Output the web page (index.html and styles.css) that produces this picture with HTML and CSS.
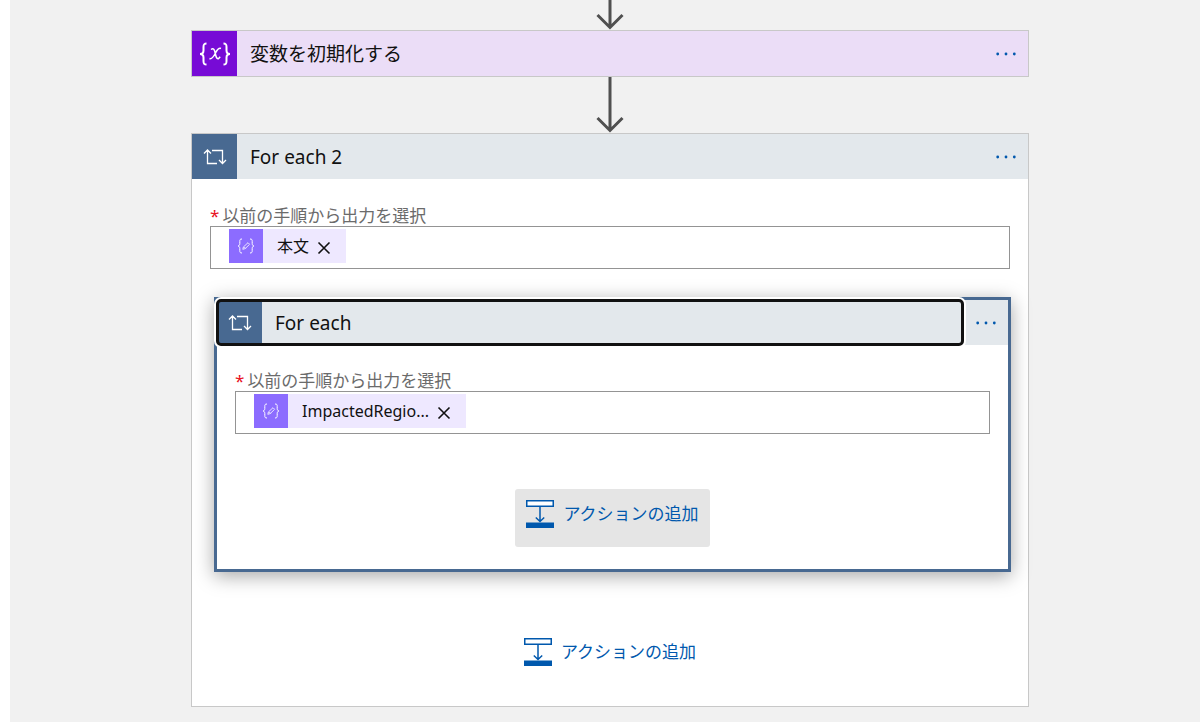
FILE: index.html
```
<!DOCTYPE html>
<html lang="ja">
<head>
    <meta charset="UTF-8">
    <meta name="viewport" content="width=device-width, initial-scale=1.0">
    <title>ロジック アプリ デザイナー</title>
    <link rel="stylesheet" href="styles.css">
</head>
<body>
    <!-- Shared icons -->
    <svg class="sprite" aria-hidden="true">
        <symbol id="icon-loop" viewBox="0 0 24 18">
            <path d="M4.5 3v12.500H14M1 5.500l3.500-3.500L8 5.500M9 2.500h10.500V14.500M16 12l3.500 3.500L23 12" fill="none" stroke="currentColor" stroke-width="1.300"/>
        </symbol>
        <symbol id="icon-add" viewBox="0 0 28 28">
            <path d="M.75.75h26.500v5.500H.75z" fill="#fff" stroke="currentColor" stroke-width="1.500"/>
            <path d="M14 6.500V21M9.800 17.500l4.200 4 4.200-4" fill="none" stroke="currentColor" stroke-width="1.500"/>
            <path d="M0 22.500h28V28H0z" fill="currentColor"/>
        </symbol>
        <symbol id="icon-token" viewBox="0 0 20 18">
            <path d="M6 2C3.800 2 3.800 3 3.800 4.500v2C3.800 8 3 9 2 9c1 0 1.800 1 1.800 2.500v2c0 1.500 0 2.500 2.200 2.500M14 2c2.200 0 2.200 1 2.200 2.500v2c0 1.500.8 2.500 1.800 2.500-1 0-1.800 1-1.800 2.500v2c0 1.500 0 2.500-2.200 2.500" fill="none" stroke="currentColor" stroke-width="1"/>
            <path d="M6.800 12.300l.6-2.300 4.600-4.300 1.600 1.600-4.400 4.300zM8 9.800l1.600 1.600" fill="none" stroke="currentColor" stroke-width=".8"/>
        </symbol>
        <symbol id="icon-close" viewBox="0 0 14 14">
            <path d="M1.500 1.500l11 11M12.500 1.500l-11 11" fill="none" stroke="currentColor" stroke-width="1.600"/>
        </symbol>
        <symbol id="icon-more" viewBox="0 0 22 4">
            <circle cx="2.700" cy="2" r="1.400" fill="currentColor"/>
            <circle cx="11" cy="2" r="1.400" fill="currentColor"/>
            <circle cx="19.300" cy="2" r="1.400" fill="currentColor"/>
        </symbol>
    </svg>

    <main class="canvas">
        <div class="flow">
            <svg class="arrow arrow-top" viewBox="0 0 28 30" aria-hidden="true">
                <path d="M14 0v28M1.500 15L14 27.500 26.500 15"/>
            </svg>

            <section class="card">
                <div class="card-header variable">
                    <button type="button" class="card-title">
                        <span class="card-icon">
                            <svg class="icon-variable" viewBox="0 0 32 24" aria-hidden="true">
                                <path d="M7.500 1.500C4.500 1.500 4.500 3 4.500 5v3.500c0 2-1 3.500-3.500 3.500 2.500 0 3.500 1.500 3.500 3.500V19c0 2 0 3.500 3 3.500M24.500 1.500c3 0 3 1.500 3 3.500v3.500c0 2 1 3.500 3.500 3.500-2.500 0-3.500 1.500-3.500 3.500V19c0 2 0 3.500-3 3.500"/>
                                <path class="thin" d="M12 7.500c2.500-1.800 3.500 0 4.200 3.500s1.300 6.500 3.500 5.500l1.500-1.800M22 6.500c-2.200-.8-3.800 1.200-5.500 4.500s-3.500 6.500-6 5.500"/>
                            </svg>
                        </span>
                        <span>変数を初期化する</span>
                    </button>
                    <button type="button" class="card-menu" aria-label="メニュー"><svg class="icon-more"><use href="#icon-more"/></svg></button>
                </div>
            </section>

            <svg class="arrow" viewBox="0 0 28 56" aria-hidden="true">
                <path d="M14 0v54M1.500 41L14 53.500 26.500 41"/>
            </svg>

            <section class="card">
                <div class="card-header loop">
                    <button type="button" class="card-title">
                        <span class="card-icon"><svg class="icon-loop"><use href="#icon-loop"/></svg></span>
                        <span>For each 2</span>
                    </button>
                    <button type="button" class="card-menu" aria-label="メニュー"><svg class="icon-more"><use href="#icon-more"/></svg></button>
                </div>
                <div class="card-body">
                    <label class="field-label" for="output-outer"><span class="required">*</span>以前の手順から出力を選択</label>
                    <div class="token-box">
                        <span class="token">
                            <span class="token-icon"><svg><use href="#icon-token"/></svg></span>
                            <span class="token-text">本文</span>
                            <button type="button" class="token-remove" aria-label="削除"><svg><use href="#icon-close"/></svg></button>
                        </span>
                        <input type="text" id="output-outer">
                    </div>

                    <section class="card nested">
                        <div class="card-header loop">
                            <button type="button" class="card-title focused">
                                <span class="card-icon"><svg class="icon-loop"><use href="#icon-loop"/></svg></span>
                                <span>For each</span>
                            </button>
                            <button type="button" class="card-menu" aria-label="メニュー"><svg class="icon-more"><use href="#icon-more"/></svg></button>
                        </div>
                        <div class="card-body">
                            <label class="field-label" for="output-inner"><span class="required">*</span>以前の手順から出力を選択</label>
                            <div class="token-box">
                                <span class="token">
                                    <span class="token-icon"><svg><use href="#icon-token"/></svg></span>
                                    <span class="token-text">ImpactedRegio...</span>
                                    <button type="button" class="token-remove" aria-label="削除"><svg><use href="#icon-close"/></svg></button>
                                </span>
                                <input type="text" id="output-inner">
                            </div>
                            <button type="button" class="add-action active"><svg><use href="#icon-add"/></svg>アクションの追加</button>
                        </div>
                    </section>

                    <button type="button" class="add-action"><svg><use href="#icon-add"/></svg>アクションの追加</button>
                </div>
            </section>
        </div>
    </main>
</body>
</html>
```

FILE: styles.css
```
* {
    box-sizing: border-box;
}
body {
    margin: 0;
    background-color: #fff;
    color: #111;
    font-family: "Noto Sans", "Noto Sans CJK JP", sans-serif;
    font-size: 16px;
}
button, input {
    font: inherit;
    color: inherit;
    border: 0;
    padding: 0;
    background: none;
}
button {
    cursor: pointer;
}
.sprite {
    display: none;
}
.canvas {
    margin: 0 0 5px 10px;
    padding: 0 10px 15px 20px;
    background-color: #f1f1f1;
}
.flow {
    display: flex;
    flex-direction: column;
    align-items: center;
    max-width: 838px;
    margin: 0 auto;
}

/* Arrows between the steps */
.arrow {
    width: 28px;
    height: 56px;
    fill: none;
    stroke: #505050;
    stroke-width: 3;
}
.arrow-top {
    height: 30px;
}

/* Cards */
.card {
    width: 100%;
    background-color: #fff;
    border: 1px solid #c8c8c8;
}
.card-header {
    display: flex;
    height: 45px;
}
.card-title {
    display: flex;
    flex: 1;
    align-items: center;
    gap: 13px;
    font-size: 19px;
    line-height: 24px;
    text-align: left;
}
.card-icon {
    display: flex;
    align-items: center;
    justify-content: center;
    width: 45px;
    height: 45px;
    color: #fff;
}
.card-menu {
    width: 45px;
    color: #0058ad;
}
.icon-more {
    display: block;
    width: 22px;
    height: 4px;
    margin: 0 auto;
}
.icon-loop {
    width: 24px;
    height: 18px;
}
.icon-variable {
    width: 32px;
    height: 24px;
    fill: none;
    stroke: #fff;
    stroke-width: 2;
}
.icon-variable .thin {
    stroke-width: 1.5;
}
.variable {
    background-color: #ebddf7;
}
.variable .card-icon {
    background-color: #770bd6;
}
.loop {
    background-color: #e3e8ec;
}
.loop .card-icon {
    background-color: #486991;
}
.card-body {
    display: flex;
    flex-direction: column;
    padding: 26px 18px 21px;
}
.nested {
    width: auto;
    margin: 28px -1px 55px 4px;
    border: 3px solid #486991;
    box-shadow: 0 4px 18px rgba(0, 0, 0, 0.35);
}
.nested .card-body {
    padding: 25px 18px 22px;
}
.focused {
    border-radius: 4px;
    outline: 3px solid #111;
    outline-offset: -2px;
    box-shadow: 0 0 0 3px #fff;
}
.focused .card-icon {
    border-radius: 4px 0 0 4px;
}

/* Fields */
.field-label {
    color: #6b6b6b;
    font-size: 17px;
    line-height: 21px;
}
.required {
    margin-right: 3px;
    color: #e81123;
}
.token-box {
    display: flex;
    height: 43px;
    padding: 2px 18px;
    border: 1px solid #949494;
}
.token-box input {
    flex: 1;
    min-width: 0;
    outline: 0;
}
.token {
    display: flex;
    align-items: center;
    height: 34px;
    background-color: #eee8ff;
    font-size: 16px;
    line-height: 24px;
}
.token-icon {
    display: flex;
    align-items: center;
    justify-content: center;
    width: 34px;
    height: 34px;
    margin-right: 14px;
    background-color: #8c6cff;
    color: #fff;
}
.token-icon svg {
    width: 20px;
    height: 18px;
}
.token-remove {
    margin: 3px 15px 0 8px;
}
.token-remove svg {
    display: block;
    width: 14px;
    height: 14px;
}

/* Add action */
.add-action {
    display: flex;
    align-self: center;
    gap: 9px;
    height: 58px;
    padding: 11px;
    border-radius: 3px;
    color: #0058ad;
    font-size: 17px;
    line-height: 28px;
}
.add-action svg {
    width: 28px;
    height: 28px;
}
.add-action.active {
    margin-top: 55px;
    background-color: #e5e5e5;
}
```
